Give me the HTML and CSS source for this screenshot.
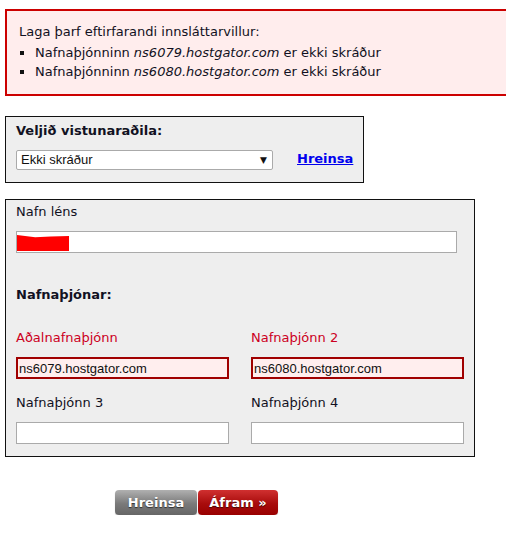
FILE: index.html
```html
<!DOCTYPE html>
<html lang="is">
<head>
<meta charset="utf-8">
<title>Lén</title>
<link rel="stylesheet" href="styles.css">
</head>
<body>
<div class="page">
  <div class="errors">
    <p class="errors-title">Laga þarf eftirfarandi innsláttarvillur:</p>
    <ul class="errors-list">
      <li>Nafnaþjónninn <em>ns6079.hostgator.com</em> er ekki skráður</li>
      <li>Nafnaþjónninn <em>ns6080.hostgator.com</em> er ekki skráður</li>
    </ul>
  </div>

  <div class="provider">
    <div class="provider-title">Veljið vistunaraðila:</div>
    <div class="provider-row">
      <div class="select-wrap">
        <div class="select">Ekki skráður</div>
        <span class="select-arrow">▼</span>
      </div>
      <a class="clear-link" href="#">Hreinsa</a>
    </div>
  </div>

  <div class="domain">
    <div class="label">Nafn léns</div>
    <div class="field-wrap wide">
      <div class="field"></div>
      <span class="redact"></span>
    </div>

    <div class="section-title">Nafnaþjónar:</div>

    <div class="ns-grid">
      <div class="ns-item">
        <div class="label error">Aðalnafnaþjónn</div>
        <div class="field invalid">ns6079.hostgator.com</div>
      </div>
      <div class="ns-item">
        <div class="label error">Nafnaþjónn 2</div>
        <div class="field invalid">ns6080.hostgator.com</div>
      </div>
      <div class="ns-item">
        <div class="label">Nafnaþjónn 3</div>
        <div class="field"></div>
      </div>
      <div class="ns-item">
        <div class="label">Nafnaþjónn 4</div>
        <div class="field"></div>
      </div>
    </div>
  </div>

  <div class="buttons">
    <button class="btn btn-gray">Hreinsa</button>
    <button class="btn btn-red">Áfram »</button>
  </div>
</div>
</body>
</html>
```

FILE: styles.css
```css
html, body {
  margin: 0;
  padding: 0;
  background: #fff;
}
body {
  font-family: "DejaVu Sans", Verdana, sans-serif;
  font-size: 13px;
  color: #111122;
  overflow: hidden;
}
.page {
  padding: 9px 0 0 5px;
}
.errors {
  width: 487px;
  border: 2px solid #cc0000;
  border-right: none;
  background: #ffeded;
  padding: 11px 12px 13px 12px;
}
.errors-title {
  margin: 0;
  line-height: 19px;
}
.errors-list {
  list-style: none;
  margin: 2px 0 0 0;
  padding: 0;
}
.errors-list li {
  line-height: 19px;
  display: flex;
  align-items: center;
}
.errors-list li::before {
  content: "";
  width: 4px;
  height: 4px;
  background: #111;
  margin: 0 11px 0 1px;
  flex: none;
}
.errors-list em {
  font-style: italic;
  margin: 0 4px;
}

.provider {
  margin-top: 20px;
  width: 337px;
  border: 1px solid #111;
  background: #eeeeee;
  padding: 6px 10px 12px 10px;
}
.provider-title {
  font-weight: bold;
  line-height: 16px;
}
.provider-row {
  display: flex;
  align-items: center;
  margin-top: 11px;
}
.select-wrap {
  position: relative;
  width: 257px;
  flex: none;
}
.select {
  height: 18px;
  border: 1px solid #aaaaaa;
  border-radius: 2px;
  background: #fff;
  font-family: "Liberation Sans", Arial, sans-serif;
  font-size: 13px;
  line-height: 18px;
  padding-left: 4px;
  color: #111;
}
.select-arrow {
  position: absolute;
  right: 6px;
  top: 4px;
  font-size: 9px;
  line-height: 12px;
  color: #111;
}
.clear-link {
  margin-left: 24px;
  font-weight: bold;
  color: #0000ee;
  text-decoration: underline;
  white-space: nowrap;
  margin-top: -3px;
}

.domain {
  margin-top: 16px;
  width: 448px;
  border: 1px solid #111;
  background: #eeeeee;
  padding: 4px 10px 12px 10px;
}
.label {
  line-height: 16px;
}
.label.error {
  color: #cc0022;
}
.field {
  box-sizing: border-box;
  height: 22px;
  border: 1px solid #aaaaaa;
  background: #fff;
  font-family: "Liberation Sans", Arial, sans-serif;
  font-size: 13px;
  line-height: 18px;
  padding-left: 1px;
  color: #111;
  margin-top: 11px;
}
.field.invalid {
  border: 2px solid #a00000;
  background: #ffeeee;
  line-height: 19px;
}
.field-wrap {
  position: relative;
  padding-top: 11px;
}
.field-wrap .field {
  margin-top: 0;
}
.field-wrap.wide {
  width: 441px;
}
.redact {
  position: absolute;
  left: 1px;
  top: 15px;
  width: 52px;
  height: 16px;
  background: #ff0000;
  clip-path: polygon(0 0, 35% 14%, 65% 10%, 100% 6%, 100% 100%, 0 100%);
}
.section-title {
  font-weight: bold;
  line-height: 16px;
  margin-top: 34px;
}
.ns-grid {
  display: grid;
  grid-template-columns: 213px 213px;
  column-gap: 22px;
  row-gap: 16px;
  margin-top: 27px;
}

.buttons {
  display: flex;
  gap: 1px;
  margin: 33px 0 0 110px;
}
.btn {
  height: 25px;
  border: none;
  border-radius: 4px;
  font-family: "DejaVu Sans", Verdana, sans-serif;
  font-size: 13px;
  font-weight: bold;
  color: #fff;
  padding: 0;
  text-shadow: 0 1px 1px rgba(0,0,0,0.6);
  box-shadow: 0 1px 1px rgba(0,0,0,0.25);
}
.btn-gray {
  width: 82px;
  background: linear-gradient(#b0b0b0, #7a7a7a 55%, #666);
}
.btn-red {
  width: 80px;
  background: linear-gradient(#d03030, #a80c0c 55%, #900);
}
```
